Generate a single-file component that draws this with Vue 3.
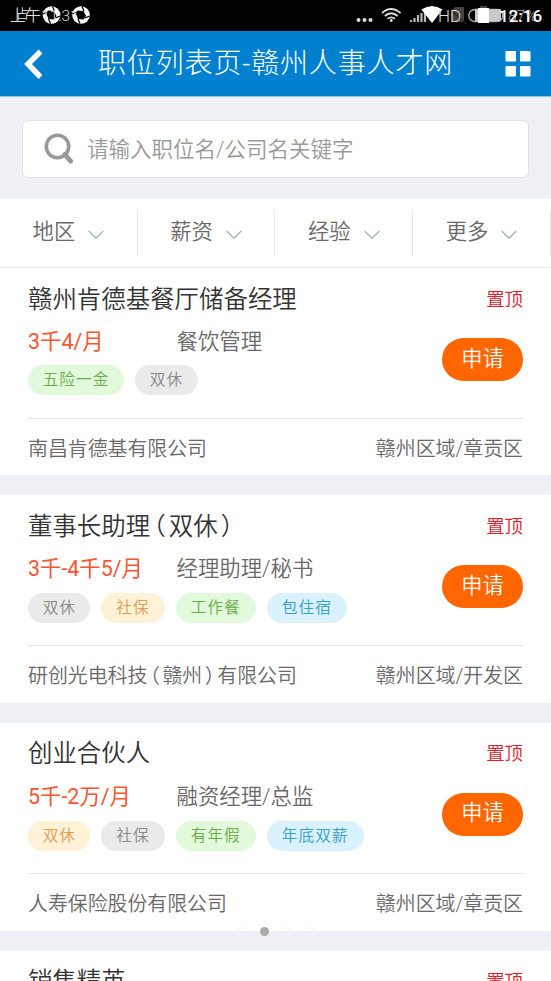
<script setup>
const filters = ['地区', '薪资', '经验', '更多']

const jobs = [
  {
    title: '赣州肯德基餐厅储备经理',
    pay: '3千4/月',
    kind: '餐饮管理',
    tags: [['五险一金', 'green'], ['双休', 'gray']],
    company: '南昌肯德基有限公司',
    area: '赣州区域/章贡区',
  },
  {
    title: '董事长助理（双休）',
    pay: '3千-4千5/月',
    kind: '经理助理/秘书',
    tags: [['双休', 'gray'], ['社保', 'amber'], ['工作餐', 'green'], ['包住宿', 'blue']],
    company: '研创光电科技（赣州）有限公司',
    area: '赣州区域/开发区',
  },
  {
    title: '创业合伙人',
    pay: '5千-2万/月',
    kind: '融资经理/总监',
    tags: [['双休', 'amber'], ['社保', 'gray'], ['有年假', 'green'], ['年底双薪', 'blue']],
    company: '人寿保险股份有限公司',
    area: '赣州区域/章贡区',
  },
  { title: '销售精英', pay: '', kind: '', tags: [], company: '', area: '' },
]

// Splits text so that brackets can be set narrower than a full em
const pieces = (text) => text.split(/([（）])/).filter(Boolean)
const isParen = (s) => s === '（' || s === '）'
</script>

<template>
  <div class="screen">
    <header class="status">
      <svg class="status-icons" width="551" height="31" viewBox="0 0 551 31">
        <g v-for="x in [51.5, 81]" :key="x" :transform="`translate(${x} 15)`">
          <circle r="8.8" fill="#fff" />
          <path d="M-3.500-4.500 L2.500-4 L5 1 L2.500 4.500 L-3 4 L-5-1Z" fill="#000" />
          <path d="M-8.500-1 L-4-3 M1-8.500 L3-4 M8.500 1 L4 3 M-1 8.500 L-3 4" stroke="#000" stroke-width="1.3" />
        </g>
        <g fill="#ddd"><circle cx="358.500" cy="20" r="2" /><circle cx="364.500" cy="20" r="2" /><circle cx="370.500" cy="20" r="2" /></g>
        <g fill="none" stroke="#ddd" stroke-width="1.7">
          <path d="M382 13 Q391 5 400.500 13" />
          <path d="M384.800 16 Q391 10.500 397.700 16" />
          <path d="M387.600 18.800 Q391 16 395 18.800" />
        </g>
        <circle cx="391.300" cy="20.500" r="1.400" fill="#ddd" />
        <path d="M411 22v-2 M414.500 22v-4 M418 22v-7 M421.500 22v-9 M425 22V11" stroke="#bbb" stroke-width="2.200" />
        <path d="M451 12 L455 7 H464 V22 H451Z" fill="#444" />
        <path d="M450 9 L466 24" stroke="#222" stroke-width="1.500" />
        <rect x="468.800" y="9.500" width="34" height="12" rx="6" fill="none" stroke="#aaa" stroke-width="1.400" />
        <rect x="475" y="9" width="26" height="12.500" rx="1" fill="#c9c9c9" />
        <rect x="480" y="6" width="7" height="4" fill="#444" />
        <rect x="478" y="8" width="11" height="15" fill="#fff" />
        <path d="M421.500 9.500 Q432 2.500 442.500 9.500 L432 23Z" fill="#fff" />
      </svg>
      <span class="st clock-cn">上午11:31</span>
      <span class="st tray">占</span>
      <span class="st hd">HD</span>
      <span class="st percent">87%</span>
      <span class="st clock">12:16</span>
    </header>

    <nav class="nav">
      <svg class="back" width="20" height="32" viewBox="0 0 20 32">
        <path d="M18.500 2.500 L6 15 L18.500 28" fill="none" stroke="#fff" stroke-width="5.500" />
      </svg>
      <h1>职位列表页-赣州人事人才网</h1>
      <svg class="apps" width="26" height="26" viewBox="0 0 26 26" fill="#fff">
        <rect x="0.500" y="0" width="10.500" height="10.500" rx="1" />
        <rect x="15" y="0" width="10.500" height="10.500" rx="1" />
        <rect x="0.500" y="15" width="10.500" height="10.500" rx="1" />
        <rect x="15" y="15" width="10.500" height="10.500" rx="1" />
      </svg>
    </nav>

    <div class="search-wrap">
      <div class="search">
        <svg width="30" height="32" viewBox="0 0 30 32" fill="none" stroke="#999">
          <circle cx="13.500" cy="13.500" r="11.200" stroke-width="3.600" />
          <path d="M21 21.500 L26.500 28" stroke-width="5" stroke-linecap="round" />
        </svg>
        <span>请输入职位名/公司名关键字</span>
      </div>
    </div>

    <div class="filters">
      <div v-for="f in filters" :key="f" class="filter">
        <span>{{ f }}</span>
        <svg width="16" height="10" viewBox="0 0 16 10">
          <path d="M0.700 1 L8 8.300 L15.300 1" fill="none" stroke="#a5bab3" stroke-width="1.500" />
        </svg>
      </div>
    </div>

    <main class="list">
      <article v-for="job in jobs" :key="job.title" class="card">
        <div class="head">
          <h2><span v-for="(p, i) in pieces(job.title)" :key="i" :class="{ paren: isParen(p) }">{{ p }}</span></h2>
          <span class="top">置顶</span>
        </div>
        <div class="body">
          <div class="info">
            <div class="facts"><span class="pay">{{ job.pay }}</span><span class="kind">{{ job.kind }}</span></div>
            <div class="tags"><span v-for="t in job.tags" :key="t[0]" class="tag" :class="t[1]">{{ t[0] }}</span></div>
          </div>
          <button class="apply">申请</button>
        </div>
        <div class="foot">
          <span><span v-for="(p, i) in pieces(job.company)" :key="i" :class="{ paren: isParen(p) }">{{ p }}</span></span>
          <span>{{ job.area }}</span>
        </div>
      </article>
    </main>

    <div class="pager"><i></i><i class="on"></i><i></i><i></i></div>
  </div>
</template>

<style>
body { margin: 0; overflow: hidden; }
</style>

<style scoped>
.screen {
  position: relative;
  width: 551px;
  height: 981px;
  overflow: hidden;
  background: #eff0f5;
  font-family: Roboto, "Noto Sans CJK SC", sans-serif;
  font-weight: 350;
  color: #686868;
}
.status { position: relative; height: 31px; background: #000; color: #ddd; }
.status-icons { position: absolute; left: 0; top: 0; }
.st { position: absolute; white-space: nowrap; line-height: 20px; font-size: 15px; top: 6px; }
.clock-cn { left: 10px; font-size: 15.500px; }
.tray { left: 16px; top: 4px; font-size: 13px; }
.hd { left: 438px; font-size: 17px; }
.percent { left: 508px; font-size: 15.500px; color: #aaa; }
.clock { left: 499px; font-size: 17px; font-weight: 500; color: #fff; }

.nav {
  display: flex;
  align-items: center;
  box-sizing: border-box;
  height: 66px;
  padding: 0 20px 0 22px;
  border-bottom: 1px solid #8fc8ee;
  background: #0280d0;
}
.back { flex: none; margin-top: 2px; }
.nav h1 {
  flex: 1;
  margin: 0;
  padding-left: 56px;
  font-size: 28px;
  line-height: 40px;
  letter-spacing: 0.850px;
  font-weight: 300;
  color: #fff;
  white-space: nowrap;
}
.apps { flex: none; margin-top: 1px; }

.search-wrap { box-sizing: border-box; height: 102px; padding: 23px 22px 0; }
.search {
  display: flex;
  align-items: center;
  gap: 13px;
  box-sizing: border-box;
  height: 58px;
  padding-left: 21px;
  border: 1.500px solid #e1e2e3;
  border-radius: 6px;
  background: #fff;
  font-size: 21.500px;
  color: #999;
}
.search span { margin-top: -4px; }

.filters {
  display: grid;
  grid-template-columns: repeat(4, 137.700px);
  box-sizing: border-box;
  height: 69px;
  padding: 11px 0 0;
  border-bottom: 1px solid #ececec;
  background: #fff;
}
.filter {
  display: flex;
  align-items: center;
  gap: 13px;
  box-sizing: border-box;
  height: 46px;
  padding: 0 0 2px 32.600px;
  border-right: 1.500px solid #e8e8e8;
  font-size: 21.300px;
}
.filter span { margin-top: -5px; }
.filter svg { margin-top: 5px; }

.list { display: flex; flex-direction: column; gap: 20px; }
.card { flex: none; box-sizing: border-box; height: 207.700px; padding: 0 28px; background: #fff; }
.card:first-child { height: 207.200px; }
.head { display: flex; justify-content: space-between; align-items: center; height: 60px; }
h2 { margin: 3px 0 0; font-size: 24.450px; line-height: 36px; font-weight: 350; color: #333; white-space: nowrap; }
.paren { font-feature-settings: "halt"; margin: 0 0.130em; }
.top { margin-top: -1px; font-size: 18.400px; color: #e02028; }
.body { display: flex; justify-content: space-between; height: 90px; }
.card:first-child .body { height: 89.500px; }
.info { display: flex; flex-direction: column; }
.facts {
  display: grid;
  grid-template-columns: 148.500px auto;
  box-sizing: border-box;
  height: 38px;
  padding-top: 1px;
  line-height: 25px;
  font-size: 21.400px;
  white-space: nowrap;
}
.card:first-child .facts { height: 37px; }
.pay { color: #fa5530; font-weight: 400; }
.tags { display: flex; gap: 11px; }
.tag {
  height: 30px;
  padding: 0 15px 0 15px;
  border-radius: 15px;
  font-size: 15.700px;
  line-height: 29px;
  letter-spacing: 1px;
  white-space: nowrap;
}
.tag:first-child { padding: 0 14.300px 0 14.700px; }
.green { background: #e2fadb; color: #6aab4c; }
.gray { background: #eaeaea; color: #888; }
.amber { background: #fff2d6; color: #e29a50; }
.blue { background: #daf1fe; color: #35a0c4; }
.apply {
  width: 81px;
  height: 43px;
  margin-top: 10px;
  padding: 0 0 2px;
  border: 0;
  border-radius: 22px;
  background: #f60;
  color: #fff;
  font: 350 21.300px/40px Roboto, "Noto Sans CJK SC", sans-serif;
}
.foot {
  display: flex;
  justify-content: space-between;
  align-items: center;
  box-sizing: border-box;
  height: 58px;
  border-top: 1.500px solid #e6e6e6;
  font-size: 19.900px;
  white-space: nowrap;
}
.pager { position: absolute; left: 237px; top: 927px; display: flex; gap: 13.500px; }
.pager i { box-sizing: border-box; width: 9px; height: 9px; border: 1px solid #f5f5f8; border-radius: 50%; }
.pager .on { border: 0; background: #aaa; }
</style>
